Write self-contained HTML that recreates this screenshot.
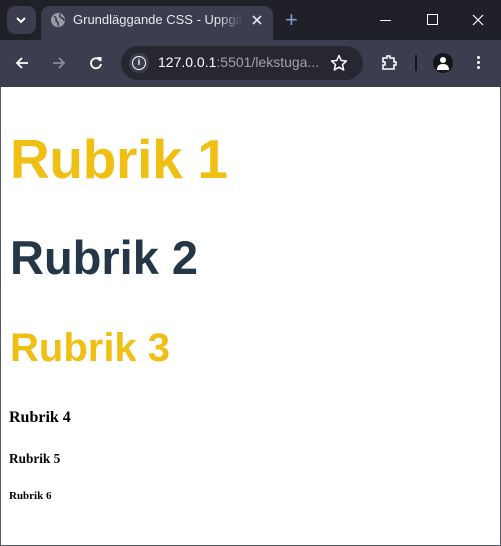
<!DOCTYPE html>
<html><head><meta charset="utf-8"><style>
*{margin:0;padding:0;box-sizing:border-box}
body{width:501px;height:546px;position:relative;overflow:hidden;background:#fff;font-family:"Liberation Sans",sans-serif}
.top{position:absolute;left:0;top:0;width:501px;height:40px;background:#1f2028}
.tb{position:absolute;left:0;top:40px;width:501px;height:47px;background:#3c3e50}
.a{position:absolute;white-space:nowrap}
.frame{position:absolute;left:0;top:87px;width:501px;height:459px;border:1px solid #555a6a;border-top:none}
.s{font-weight:bold;line-height:1}
.sr{font-family:"Liberation Serif",serif;font-weight:bold;line-height:1;color:#000}
</style></head><body>
<div class="top"></div>
<div class="a" style="left:7px;top:6px;width:29px;height:28px;border-radius:8px;background:#3c3e50"></div>
<svg class="a" style="left:15px;top:15px" width="12" height="10"><path d="M2 3 L6 7 L10 3" stroke="#fff" stroke-width="2" fill="none"/></svg>
<div class="a" style="left:41px;top:6px;width:232px;height:40px;border-radius:9px 9px 0 0;background:#3c3e50"></div>
<svg class="a" style="left:50px;top:12px" width="16" height="16"><circle cx="8" cy="8" r="7" fill="#9a9ca8"/><path d="M4 4 Q7 6 6 9 Q9 10 8 14 M10 2 Q9 5 12 6 Q14 7 14 9" stroke="#3c3e50" stroke-width="1.6" fill="none"/></svg>
<div class="a" style="left:73px;top:12px;width:170px;overflow:hidden;font-size:13px;color:#e8e8ee;-webkit-mask-image:linear-gradient(to right,#000 85%,transparent);mask-image:linear-gradient(to right,#000 85%,transparent)">Grundläggande CSS - Uppgift 0</div>
<svg class="a" style="left:251px;top:14px" width="12" height="12"><path d="M2 2 L10 10 M10 2 L2 10" stroke="#e8e8ee" stroke-width="1.6"/></svg>
<div class="a" style="left:285px;top:7px;font-size:22px;color:#8a9ad8">+</div>
<div class="a" style="left:380px;top:20px;width:11px;height:1px;background:#fff"></div>
<div class="a" style="left:427px;top:14px;width:11px;height:11px;border:1px solid #fff"></div>
<svg class="a" style="left:472px;top:14px" width="12" height="12"><path d="M1 1 L11 11 M11 1 L1 11" stroke="#fff" stroke-width="1.2"/></svg>
<div class="tb"></div>
<svg class="a" style="left:14px;top:55px" width="16" height="16"><path d="M14 8 H3 M8 3 L3 8 L8 13" stroke="#fff" stroke-width="1.8" fill="none"/></svg>
<svg class="a" style="left:51px;top:55px" width="16" height="16"><path d="M2 8 H13 M8 3 L13 8 L8 13" stroke="#8a8c98" stroke-width="1.8" fill="none"/></svg>
<svg class="a" style="left:88px;top:55px" width="16" height="16"><path d="M12.5 6 A5 5 0 1 0 13 9" stroke="#fff" stroke-width="1.8" fill="none"/><path d="M9 2 L13.5 2 L13.5 6.5Z" fill="#fff"/></svg>
<div class="a" style="left:121px;top:46px;width:242px;height:34px;border-radius:17px;background:#262731"></div>
<div class="a" style="left:129px;top:53px;width:20px;height:20px;border-radius:10px;background:#3c3e50"></div>
<div class="a" style="left:132px;top:56px;width:14px;height:14px;border-radius:7px;border:1.5px solid #fff;color:#fff;font-size:9px;text-align:center;line-height:11px;font-weight:bold">i</div>
<div class="a" style="left:158px;top:54px;font-size:14px;color:#fff">127.0.0.1<span style="color:#a0a2b0">:5501/lekstuga...</span></div>
<svg class="a" style="left:330px;top:54px" width="18" height="18"><path d="M9 1.5 L11.2 6.5 L16.5 7 L12.5 10.6 L13.7 16 L9 13.2 L4.3 16 L5.5 10.6 L1.5 7 L6.8 6.5Z" stroke="#fff" stroke-width="1.5" fill="none" stroke-linejoin="round"/></svg>
<svg class="a" style="left:380px;top:53px" width="18" height="18"><path d="M3 5 H7 V3 H10 V5 H14 V9 H16 V12 H14 V16 H3 V12 H5 V9 H3Z" stroke="#fff" stroke-width="1.6" fill="none"/></svg>
<div class="a" style="left:415px;top:55px;width:2px;height:16px;background:#15161c"></div>
<div class="a" style="left:433px;top:53px;width:20px;height:20px;border-radius:10px;background:#15161c;overflow:hidden"><div class="a" style="left:7px;top:4px;width:6px;height:6px;border-radius:3px;background:#fff"></div><div class="a" style="left:4px;top:11px;width:12px;height:6px;border-radius:5px 5px 0 0;background:#fff"></div></div>
<div class="a" style="left:477px;top:56px;width:3px;height:3px;border-radius:2px;background:#fff;box-shadow:0 5px 0 #fff,0 10px 0 #fff"></div>
<div class="frame"></div>
<div class="a s" style="left:10px;top:132px;font-size:55px;color:#f0bf14;letter-spacing:-0.3px">Rubrik 1</div>
<div class="a s" style="left:10px;top:234px;font-size:47px;color:#253746">Rubrik 2</div>
<div class="a s" style="left:10px;top:328px;font-size:40px;color:#f0bf14">Rubrik 3</div>
<div class="a sr" style="left:9px;top:410px;font-size:16px">Rubrik 4</div>
<div class="a sr" style="left:9px;top:452px;font-size:13.28px">Rubrik 5</div>
<div class="a sr" style="left:9px;top:491px;font-size:11px">Rubrik 6</div>
</body></html>
